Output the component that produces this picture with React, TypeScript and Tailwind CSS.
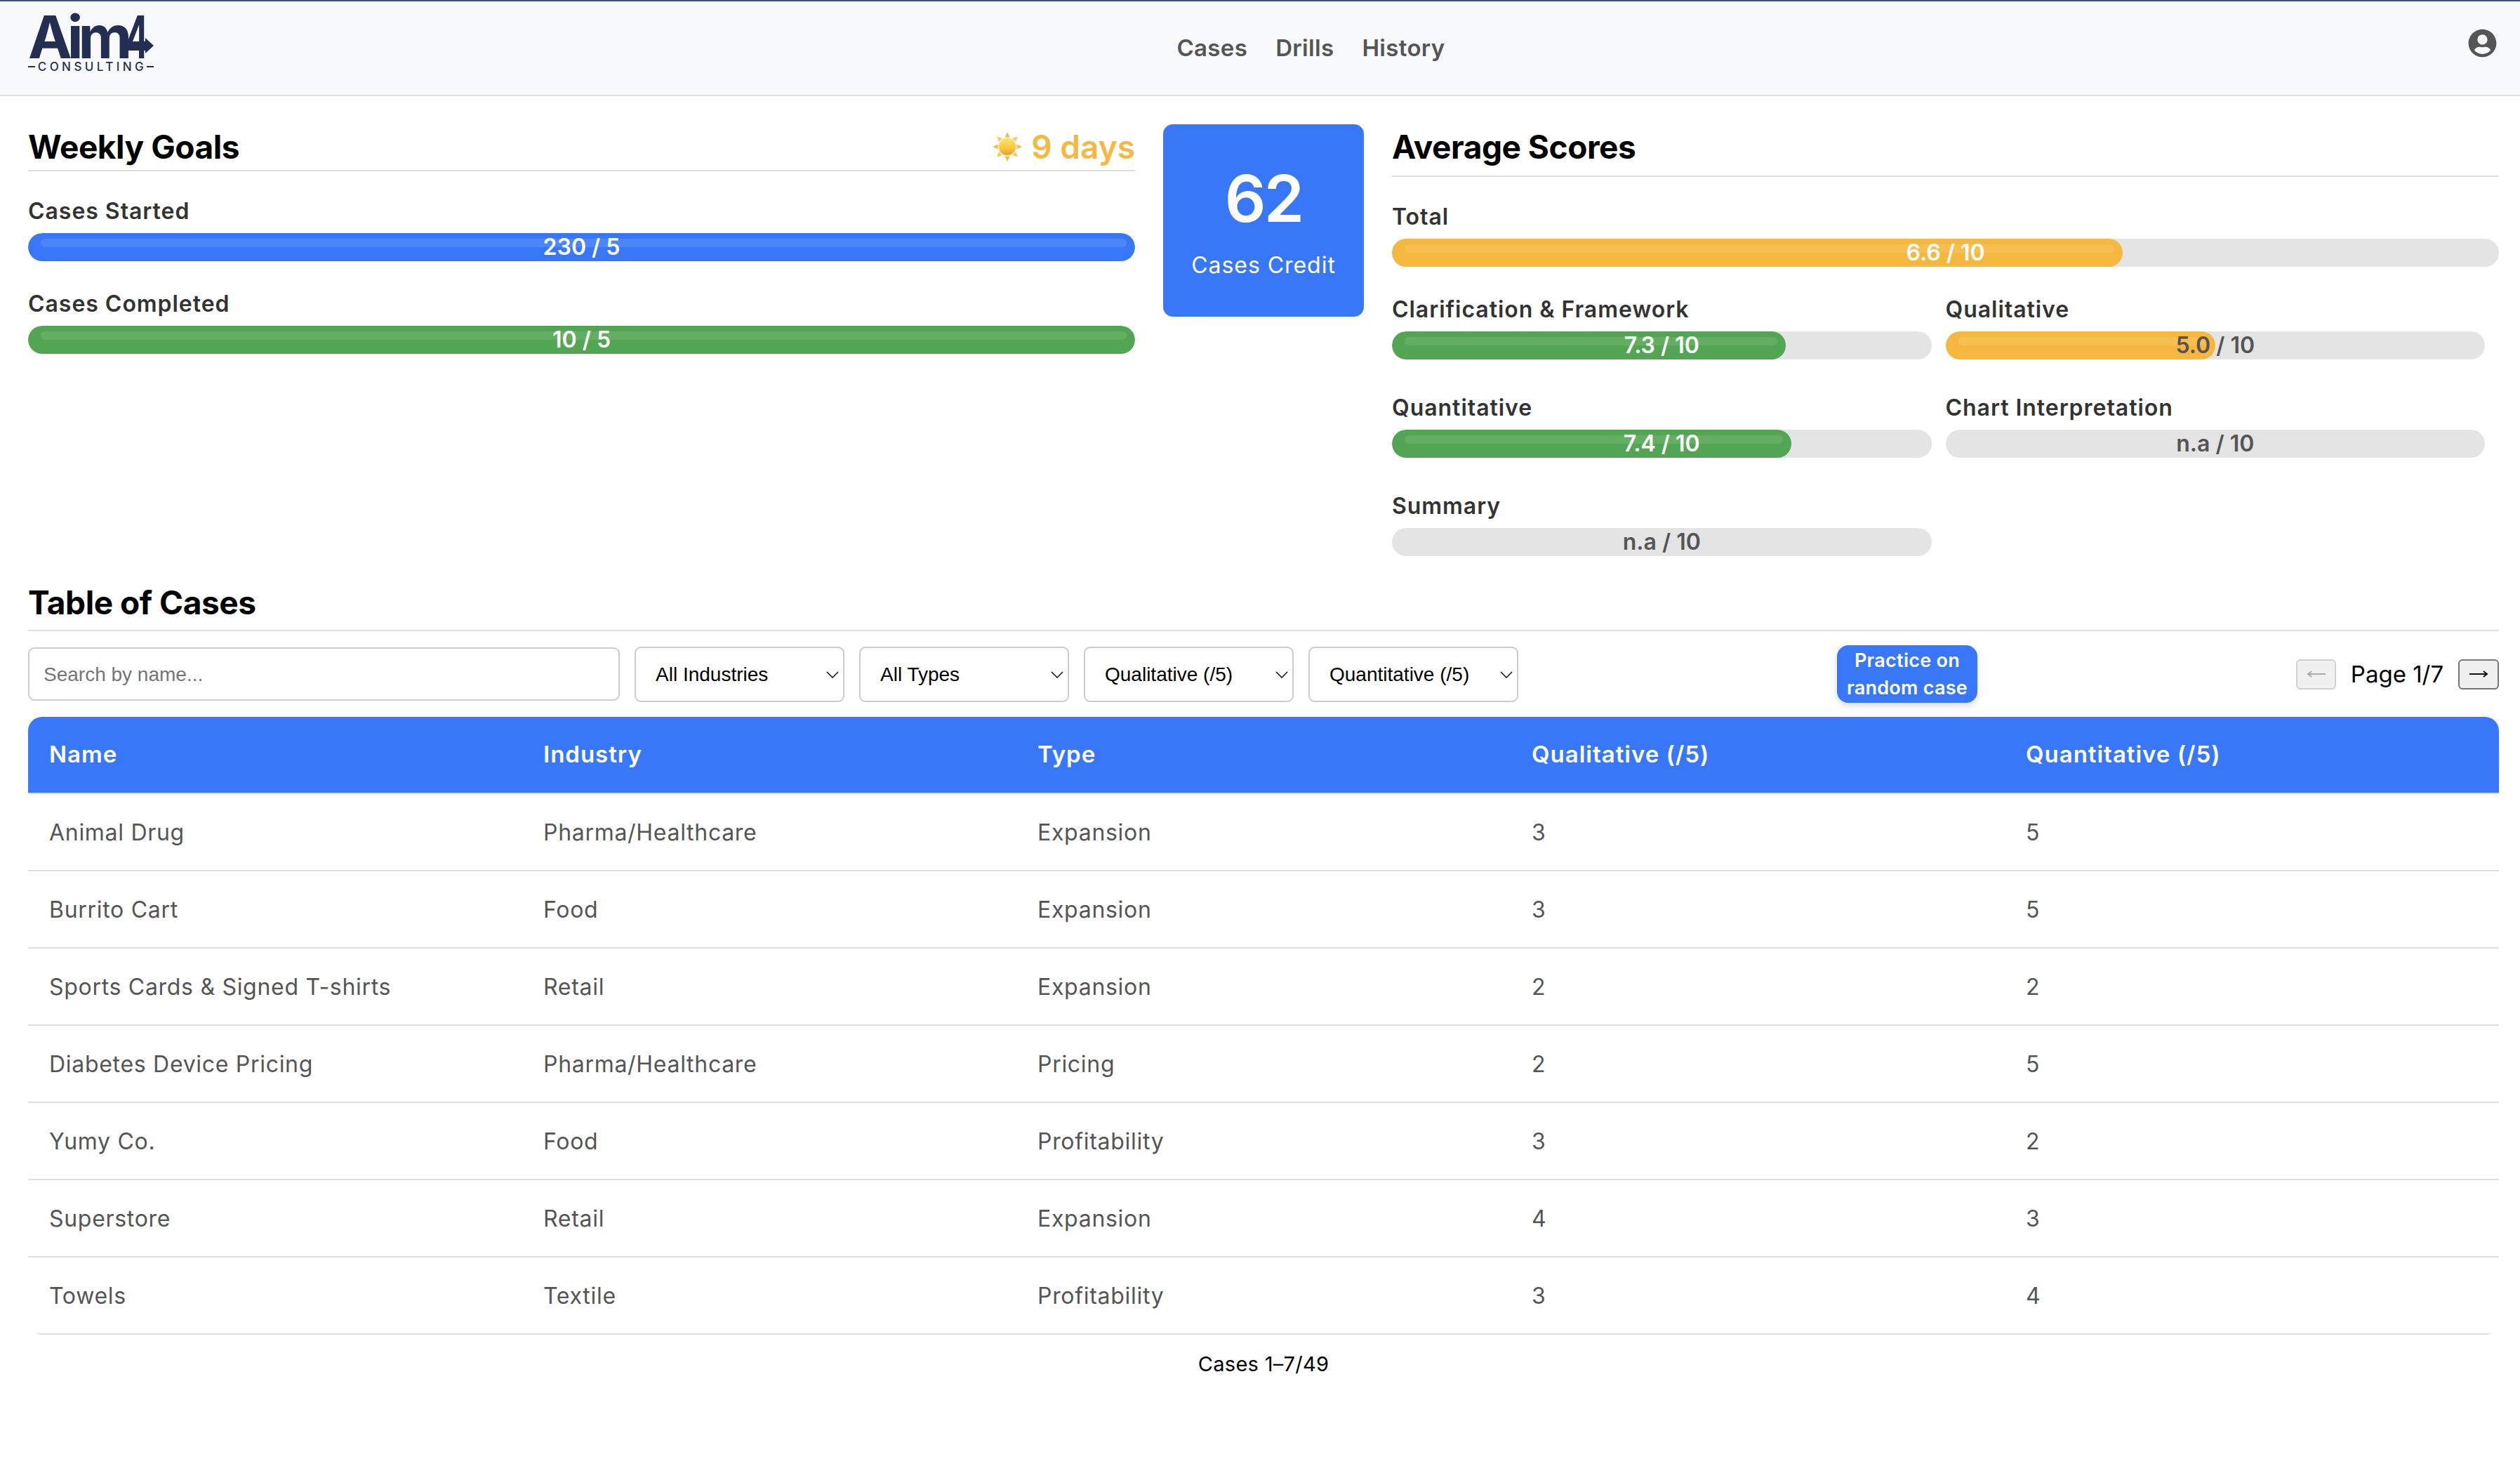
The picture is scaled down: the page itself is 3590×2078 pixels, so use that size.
import { FaUserCircle } from 'react-icons/fa'

const cases = [
  { name: 'Animal Drug', industry: 'Pharma/Healthcare', type: 'Expansion', qual: 3, quant: 5 },
  { name: 'Burrito Cart', industry: 'Food', type: 'Expansion', qual: 3, quant: 5 },
  { name: 'Sports Cards & Signed T-shirts', industry: 'Retail', type: 'Expansion', qual: 2, quant: 2 },
  { name: 'Diabetes Device Pricing', industry: 'Pharma/Healthcare', type: 'Pricing', qual: 2, quant: 5 },
  { name: 'Yumy Co.', industry: 'Food', type: 'Profitability', qual: 3, quant: 2 },
  { name: 'Superstore', industry: 'Retail', type: 'Expansion', qual: 4, quant: 3 },
  { name: 'Towels', industry: 'Textile', type: 'Profitability', qual: 3, quant: 4 },
]

const fills = {
  blue: 'bg-[#3878f8]',
  green: 'bg-[#52a552]',
  orange: 'bg-[#f6b73f]',
} as const

function Logo() {
  return (
    <div className="relative self-start w-[179px] mt-[18px] text-[#242e52]">
      <div className="flex h-[66px] text-[84px] leading-[66px] font-bold whitespace-nowrap">
        <span className="tracking-[-0.085em]">Aim</span>
        <span className="inline-block ml-[-3px] origin-left scale-x-[0.6]">4</span>
      </div>
      <svg className="absolute left-[137px] top-[34px]" width="42" height="22" viewBox="0 0 42 22">
        <path d="M0 5h30V0l12 11-12 11v-5H0z" fill="#242e52" />
      </svg>
      <div className="flex items-center justify-between h-[18px]">
        <span className="w-[10px] h-[2px] bg-[#242e52]" />
        <span className="text-[17px] leading-[18px] font-medium tracking-[0.26em] mr-[-4px]">CONSULTING</span>
        <span className="w-[10px] h-[2px] bg-[#242e52]" />
      </div>
    </div>
  )
}

function Sun() {
  const rays = [0, 45, 90, 135, 180, 225, 270, 315]
  return (
    <svg width="44" height="44" viewBox="0 0 44 44">
      <defs>
        <linearGradient id="sunFill" x1="0" y1="0" x2="0" y2="1">
          <stop offset="0" stopColor="#fde474" />
          <stop offset="0.55" stopColor="#f8c93f" />
          <stop offset="1" stopColor="#ec9a2c" />
        </linearGradient>
      </defs>
      {rays.map((r) => (
        <path key={r} d="M22 1l3.6 7.5h-7.2z" fill={r % 90 === 0 ? '#f4bd4b' : '#f7cb62'} transform={`rotate(${r} 22 22)`} />
      ))}
      <circle cx="22" cy="22" r="12.5" fill="url(#sunFill)" stroke="#fbe3b0" strokeWidth="0.8" />
    </svg>
  )
}

function ProgressBar({ pct, color, text, dark }: { pct: number; color?: keyof typeof fills; text: string; dark?: boolean }) {
  return (
    <div className="relative h-[40px] rounded-[20px] bg-[#e4e4e4] overflow-hidden">
      {color && (
        <div className={`absolute inset-y-0 left-0 rounded-[20px] ${fills[color]}`} style={{ width: `${pct}%` }}>
          <div className="absolute left-[18px] right-[12px] top-[8px] h-[12px] rounded-[6px] bg-white/10" />
        </div>
      )}
      <div className={`absolute inset-0 flex items-center justify-center text-[32px] font-semibold ${dark ? 'text-[#555555]' : 'text-white'}`}>
        {text}
      </div>
    </div>
  )
}

function Metric({ label, className, ...bar }: { label: string; className?: string; pct: number; color?: keyof typeof fills; text: string; dark?: boolean }) {
  return (
    <div className={className}>
      <div className="h-[40px] mb-[13px] text-[32px] leading-[44px] font-semibold text-[#333333] tracking-[0.03em] whitespace-nowrap">{label}</div>
      <ProgressBar {...bar} />
    </div>
  )
}

function Filter({ label }: { label: string }) {
  return (
    <div className="relative w-[299px]">
      <select className="w-full h-[79px] pl-[28px] pt-[2px] appearance-none bg-white border-2 border-[#cccccc] rounded-[9px] text-[28px] text-black font-['Liberation_Sans',Arial,sans-serif]">
        <option>{label}</option>
      </select>
      <svg className="absolute right-[8px] top-[35px] pointer-events-none" width="18" height="10" viewBox="0 0 18 10">
        <path d="M1 1l8 8 8-8" fill="none" stroke="#111111" strokeWidth="1.5" />
      </svg>
    </div>
  )
}

export default function App() {
  return (
    <div className="min-h-[2078px] bg-white font-['Inter',sans-serif]">
      {/* Navbar */}
      <header className="h-[137px] flex items-center justify-between pl-[40px] pr-[33px] bg-[#f8f9fb] border-t-2 border-t-[#3f5475] border-b-2 border-b-[#dedede]">
        <Logo />
        <nav className="flex gap-[40px] text-[33px] font-semibold tracking-[0.01em] text-[#555555]">
          <span>Cases</span>
          <span>Drills</span>
          <span>History</span>
        </nav>
        <FaUserCircle className="w-[41px] h-[41px] mt-[-15px] text-[#555555]" />
      </header>

      <main className="pl-[40px] pr-[30px]">
        <section className="grid grid-cols-[1fr_286px_1fr] gap-x-[40px] pt-[40px]">
          {/* Weekly goals */}
          <div>
            <div className="h-[67px] flex justify-between border-b-2 border-[#dedede]">
              <h2 className="text-[46px] leading-[64px] font-bold text-black tracking-[-0.01em]">Weekly Goals</h2>
              <div className="flex gap-[12px] h-[64px] items-center text-[46px] font-semibold text-[#f6b843]">
                <Sun />
                <span>9 days</span>
              </div>
            </div>
            <Metric className="mt-[35px] mb-[39px]" label="Cases Started" pct={100} color="blue" text="230 / 5" />
            <Metric label="Cases Completed" pct={100} color="green" text="10 / 5" />
          </div>

          {/* Credit */}
          <div className="h-[274px] flex flex-col items-center rounded-[14px] bg-[#3878f8] text-white">
            <div className="mt-[56px] text-[92px] leading-[100px] font-semibold tracking-[-0.03em]">62</div>
            <div className="mt-[25px] text-[32px] leading-[40px] tracking-[0.03em]">Cases Credit</div>
          </div>

          {/* Average scores */}
          <div>
            <div className="h-[75px] border-b-2 border-[#dedede]">
              <h2 className="text-[46px] leading-[64px] font-bold text-black tracking-[-0.01em]">Average Scores</h2>
            </div>
            <Metric className="mt-[35px] mb-[39px]" label="Total" pct={66} color="orange" text="6.6 / 10" />
            <div className="grid grid-cols-2 gap-y-[47px]">
              <Metric className="pr-[20px]" label="Clarification & Framework" pct={73} color="green" text="7.3 / 10" />
              <Metric className="pr-[20px]" label="Qualitative" pct={50} color="orange" text="5.0 / 10" dark />
              <Metric className="pr-[20px]" label="Quantitative" pct={74} color="green" text="7.4 / 10" />
              <Metric className="pr-[20px]" label="Chart Interpretation" pct={0} text="n.a / 10" dark />
              <Metric className="pr-[20px]" label="Summary" pct={0} text="n.a / 10" dark />
            </div>
          </div>
        </section>

        {/* Table of cases */}
        <section className="mt-[33px]">
          <h2 className="pt-[3px] pb-[9px] border-b-2 border-[#dedede] text-[46px] leading-[60px] font-bold text-black tracking-[-0.01em]">Table of Cases</h2>

          <div className="h-[82px] my-[20px] flex items-center justify-between">
            <div className="flex items-center gap-[21px]">
              <input
                placeholder="Search by name..."
                className="w-[843px] h-[76px] px-[20px] pt-[2px] bg-white border-2 border-[#cccccc] rounded-[9px] text-[28px] placeholder:text-[#757575] font-['Liberation_Sans',Arial,sans-serif]"
              />
              <Filter label="All Industries" />
              <Filter label="All Types" />
              <Filter label="Qualitative (/5)" />
              <Filter label="Quantitative (/5)" />
            </div>
            <button className="w-[200px] h-[82px] rounded-[16px] bg-[#3878f8] text-white text-[27px] leading-[39px] font-semibold tracking-[0.01em] shadow-[0_4px_10px_rgba(0,0,0,0.15)]">
              Practice on
              <br />
              random case
            </button>
            <div className="flex items-center">
              <button className="w-[57px] h-[43px] flex items-center justify-center bg-[#f0f0f0] border-2 border-[#d0d0d0] rounded-[6px]">
                <svg width="26" height="12" viewBox="0 0 26 12" fill="none" stroke="#aaaaaa" strokeWidth="2">
                  <path d="M26 6H1M6 2L1 6l5 4" />
                </svg>
              </button>
              <span className="w-[174px] pt-[2px] text-center text-[33px] text-black">Page 1/7</span>
              <button className="w-[58px] h-[43px] flex items-center justify-center bg-[#efefef] border-2 border-[#767676] rounded-[6px]">
                <svg width="26" height="12" viewBox="0 0 26 12" fill="none" stroke="#111111" strokeWidth="2">
                  <path d="M0 6h25M20 2l5 4-5 4" />
                </svg>
              </button>
            </div>
          </div>

          <div className="overflow-hidden rounded-[20px]">
            <table className="w-full table-fixed border-separate border-spacing-0">
              <thead>
                <tr className="h-[110px] text-white text-[33px] tracking-[0.03em]">
                  <th className="pl-[30px] text-left font-semibold bg-[#3878f8] border-b-2 border-[#dedede]">Name</th>
                  <th className="pl-[30px] text-left font-semibold bg-[#3878f8] border-b-2 border-[#dedede]">Industry</th>
                  <th className="pl-[30px] text-left font-semibold bg-[#3878f8] border-b-2 border-[#dedede]">Type</th>
                  <th className="pl-[30px] text-left font-semibold bg-[#3878f8] border-b-2 border-[#dedede]">Qualitative (/5)</th>
                  <th className="pl-[30px] text-left font-semibold bg-[#3878f8] border-b-2 border-[#dedede]">Quantitative (/5)</th>
                </tr>
              </thead>
              <tbody>
                {cases.map((c) => (
                  <tr key={c.name} className="h-[110px] text-[32px] tracking-[0.022em] text-[#555555]">
                    <td className="pl-[30px] pt-[2px] border-b-2 border-[#dedede]">{c.name}</td>
                    <td className="pl-[30px] pt-[2px] border-b-2 border-[#dedede]">{c.industry}</td>
                    <td className="pl-[30px] pt-[2px] border-b-2 border-[#dedede]">{c.type}</td>
                    <td className="pl-[30px] pt-[2px] border-b-2 border-[#dedede]">{c.qual}</td>
                    <td className="pl-[30px] pt-[2px] border-b-2 border-[#dedede]">{c.quant}</td>
                  </tr>
                ))}
              </tbody>
            </table>
          </div>

          <div className="mt-[20px] text-center text-[29px] tracking-[0.01em] text-black">Cases 1–7/49</div>
        </section>
      </main>
    </div>
  )
}
